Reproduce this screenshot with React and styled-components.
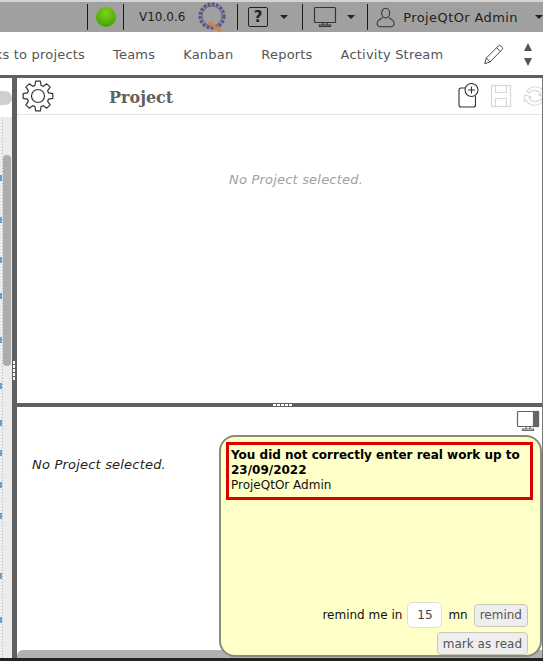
import React from 'react'
import styled, { createGlobalStyle } from 'styled-components'

const GlobalStyle = createGlobalStyle`
    html, body {
        margin: 0;
        padding: 0;
        background: #fff;
    }
    body {
        font-family: "DejaVu Sans", Verdana, sans-serif;
        overflow: hidden;
    }
`

const TICKS = [58, 100, 140, 176, 220, 266, 303, 333, 365, 396, 456, 500]

function gearPath() {
    const teeth = 8
    const pts = []
    for (let i = 0; i < teeth; i++) {
        const a = (i / teeth) * Math.PI * 2 - Math.PI / 2
        const step = (Math.PI * 2) / teeth
        const add = (r, off) => pts.push([16 + r * Math.cos(a + off * step), 16 + r * Math.sin(a + off * step)])
        add(11, -0.36)
        add(15, -0.2)
        add(15, 0.2)
        add(11, 0.36)
    }
    return 'M' + pts.map(p => p[0].toFixed(2) + ' ' + p[1].toFixed(2)).join('L') + 'Z'
}

function Gear() {
    return (
        <svg width="32" height="32" viewBox="0 0 32 32" fill="none" stroke="#333" strokeWidth="1.2" strokeLinejoin="round">
            <path d={gearPath()} />
            <circle cx="16" cy="16" r="6.5" />
        </svg>
    )
}

function QLogo() {
    return (
        <svg width="30" height="32" viewBox="0 0 30 32" fill="none">
            <circle cx="15" cy="15" r="12" stroke="#56568a" strokeWidth="3" strokeDasharray="3 1.300" />
            <circle cx="15" cy="15" r="10" stroke="#6d5a78" strokeWidth="1" />
            <path d="M12 21l6 5 6 4" stroke="#d9803f" strokeWidth="3.200" />
        </svg>
    )
}

function Monitor({ stripe }) {
    return (
        <svg width="24" height="24" viewBox="0 0 24 24" fill="none" stroke={stripe ? '#666' : '#333'} strokeWidth="1.200">
            <rect x="1.500" y="2.500" width="21" height="15" rx="1" />
            {stripe && <rect x="17.500" y="2.500" width="5" height="15" fill="#666" />}
            <path d="M10 17.500v2.500M14 17.500v2.500M6.500 21.500h11v-1.500h-11z" />
        </svg>
    )
}

function Person() {
    return (
        <svg width="20" height="23" viewBox="0 0 24 26" fill="none" stroke="#333" strokeWidth="1.300">
            <ellipse cx="12" cy="7.500" rx="5" ry="6" />
            <path d="M8 13c-1 2-6 2.500-6.500 6.500C1 23 3 24.500 5 24.500h14c2 0 4-1.500 3.500-5C22 15.500 17 15 16 13" />
        </svg>
    )
}

function Pencil() {
    return (
        <svg width="21" height="21" viewBox="0 0 24 24" fill="none" stroke="#444" strokeWidth="1.100">
            <path d="M2 22.500l1.800-6.500L17.500 2.300c1-1 2-1 3 0l1.200 1.200c1 1 1 2 0 3L8 20.500z" />
            <path d="M3.800 16l4.200 4.500M15.500 4.300l4.200 4.200" />
        </svg>
    )
}

function NewDoc() {
    return (
        <svg width="24" height="26" viewBox="0 0 24 26" fill="none" stroke="#333" strokeWidth="1.100">
            <path d="M8 5H3a2 2 0 0 0-2 2v15a2 2 0 0 0 2 2h12.500a2 2 0 0 0 2-2V13" />
            <circle cx="13.500" cy="7" r="6.500" fill="#fff" />
            <path d="M13.500 3.500v7M10 7h7" />
        </svg>
    )
}

function SaveIcon() {
    return (
        <svg width="22" height="24" viewBox="0 0 22 24" fill="none" stroke="#d6d6d6" strokeWidth="1.200">
            <rect x="1.500" y="1.500" width="19" height="21" />
            <path d="M5.500 1.500v7h11v-7M5.500 22.500v-8h11v8" />
        </svg>
    )
}

function RefreshIcon() {
    return (
        <svg width="27" height="24" viewBox="-3 0 27 24" fill="none" stroke="#d8d8d8" strokeWidth="1.200">
            <path d="M4 7A10 10 0 0 1 21 8l2-1-1 6-6-2 2-1A7.500 7.500 0 0 0 6 9z" />
            <path d="M20 17A10 10 0 0 1 3 16l-2 1 1-6 6 2-2 1A7.500 7.500 0 0 0 18 15z" />
        </svg>
    )
}

export default function App() {
    return (
        <>
            <GlobalStyle />
            <Page>
                <TopBar>
                    <TopSection>
                        <StatusDot />
                    </TopSection>
                    <VersionSection>
                        <Version>V10.0.6</Version>
                        <QLogo />
                    </VersionSection>
                    <MenuSection $gap={12}>
                        <HelpBox>?</HelpBox>
                        <Caret />
                    </MenuSection>
                    <MenuSection $gap={10}>
                        <Monitor />
                        <Caret />
                    </MenuSection>
                    <UserSection>
                        <Person />
                        <UserName>ProjeQtOr Admin</UserName>
                        <Caret />
                    </UserSection>
                </TopBar>

                <NavBar>
                    <NavItems>
                        <NavItem>Links to projects</NavItem>
                        <NavItem>Teams</NavItem>
                        <NavItem>Kanban</NavItem>
                        <NavItem>Reports</NavItem>
                        <NavItem>Activity Stream</NavItem>
                    </NavItems>
                    <NavTools>
                        <Pencil />
                        <Arrows>
                            <ArrowUp />
                            <ArrowDown />
                        </Arrows>
                    </NavTools>
                </NavBar>

                <Body>
                    <LeftPane>
                        <LeftTop />
                        <ListArea>
                            {TICKS.map(t => <Tick key={t} $top={t} />)}
                            <Scrollbar />
                        </ListArea>
                    </LeftPane>
                    <VSplitter>
                        <Grip />
                    </VSplitter>
                    <RightPane>
                        <DetailPanel>
                            <DetailHeader>
                                <Gear />
                                <Title>Project</Title>
                                <HeaderIcons>
                                    <NewDoc />
                                    <SaveIcon />
                                    <RefreshIcon />
                                </HeaderIcons>
                            </DetailHeader>
                            <EmptyText>No Project selected.</EmptyText>
                        </DetailPanel>
                        <HSplitter>
                            <HGrip />
                        </HSplitter>
                        <BottomPanel>
                            <BottomText>No Project selected.</BottomText>
                            <MonitorCorner>
                                <Monitor stripe />
                            </MonitorCorner>
                        </BottomPanel>
                        <BottomScroll />
                    </RightPane>
                </Body>
                <BlackEdge />

                <Popup>
                    <AlertBox>
                        <AlertTitle>You did not correctly enter real work up to 23/09/2022</AlertTitle>
                        <AlertUser>ProjeQtOr Admin</AlertUser>
                    </AlertBox>
                    <PopupActions>
                        <RemindRow>
                            <span>remind me in</span>
                            <MinutesInput>15</MinutesInput>
                            <span>mn</span>
                            <PopupButton>remind</PopupButton>
                        </RemindRow>
                        <PopupButton>mark as read</PopupButton>
                    </PopupActions>
                </Popup>
            </Page>
        </>
    )
}

const Page = styled.div`
    position: relative;
    width: 543px;
    height: 661px;
    display: flex;
    flex-direction: column;
    overflow: hidden;
    background: #fff;
`

const TopBar = styled.header`
    height: 30px;
    flex-shrink: 0;
    background: #a0a0a0;
    border-top: 2px solid #d4d4d4;
    display: flex;
    align-items: center;
    justify-content: flex-end;
`

const TopSection = styled.div`
    height: 26px;
    width: 37px;
    box-sizing: border-box;
    border-left: 1px solid #1a1a1a;
    border-right: 1px solid #1a1a1a;
    display: flex;
    align-items: center;
    justify-content: center;
`

const StatusDot = styled.div`
    width: 20px;
    height: 20px;
    border-radius: 50%;
    background: radial-gradient(circle at 50% 30%, #7fd320, #46a600 75%);
`

const VersionSection = styled.div`
    width: 113px;
    height: 32px;
    box-sizing: border-box;
    display: flex;
    align-items: center;
    gap: 12px;
    padding-left: 15px;
    font-size: 12px;
`

const Version = styled.span`
    color: #222;
`

const MenuSection = styled.div`
    height: 26px;
    width: 65px;
    box-sizing: border-box;
    border-left: 1px solid #1a1a1a;
    display: flex;
    align-items: center;
    gap: ${p => p.$gap}px;
    padding-left: 10px;
`

const HelpBox = styled.div`
    width: 18px;
    height: 18px;
    border: 1px solid #222;
    border-radius: 2px;
    font-size: 15px;
    font-weight: 700;
    color: #222;
    display: flex;
    align-items: center;
    justify-content: center;
`

const Caret = styled.div`
    width: 0;
    height: 0;
    border-left: 4px solid transparent;
    border-right: 4px solid transparent;
    border-top: 4px solid #222;
`

const UserSection = styled.div`
    height: 26px;
    width: 176px;
    box-sizing: border-box;
    border-left: 1px solid #1a1a1a;
    display: flex;
    align-items: center;
    padding-left: 8px;
    font-size: 13px;
    letter-spacing: 0.4px;
`

const UserName = styled.span`
    margin: 0 17px 0 8px;
    color: #222;
    white-space: nowrap;
`

const NavBar = styled.nav`
    height: 43px;
    flex-shrink: 0;
    box-sizing: border-box;
    padding-top: 2px;
    display: flex;
    align-items: center;
    justify-content: space-between;
    overflow: hidden;
    font-size: 13px;
    letter-spacing: 0.2px;
    color: #555;
`

const NavItems = styled.div`
    display: flex;
    gap: 28px;
    margin-left: -25px;
    white-space: nowrap;
`

const NavItem = styled.div``

const NavTools = styled.div`
    display: flex;
    align-items: center;
    gap: 20px;
    padding-right: 11px;
`

const Arrows = styled.div`
    display: flex;
    flex-direction: column;
    gap: 7px;
`

const ArrowUp = styled.div`
    width: 0;
    height: 0;
    border-left: 4px solid transparent;
    border-right: 4px solid transparent;
    border-bottom: 8px solid #555;
`

const ArrowDown = styled.div`
    width: 0;
    height: 0;
    border-left: 4px solid transparent;
    border-right: 4px solid transparent;
    border-top: 8px solid #555;
`

const Body = styled.div`
    flex: 1;
    min-height: 0;
    display: flex;
    border-top: 3px solid #606060;
`

const LeftPane = styled.aside`
    width: 12px;
    flex-shrink: 0;
    background: #fff;
    display: flex;
    flex-direction: column;
`

const LeftTop = styled.div`
    width: 12px;
    height: 14px;
    margin: 13px 0 12px;
    background: #cfcfcf;
    border-radius: 0 7px 7px 0;
`

const ListArea = styled.div`
    position: relative;
    flex: 1;
    background:
        repeating-linear-gradient(#b5b5b5 0 1px, transparent 1px 3px) 2px 0 / 1px 100% no-repeat,
        #ececec;
`

const Tick = styled.div`
    position: absolute;
    left: 0;
    top: ${p => p.$top}px;
    width: 2px;
    height: 6px;
    background: #6f9fc4;
`

const Scrollbar = styled.div`
    position: absolute;
    left: 3px;
    top: 38px;
    width: 8px;
    height: 211px;
    background: #adadad;
    border-radius: 4px;
`

const VSplitter = styled.div`
    width: 5px;
    flex-shrink: 0;
    background: #606060;
`

const Grip = styled.div`
    width: 2px;
    height: 20px;
    margin: 283px 0 0 1px;
    background: repeating-linear-gradient(#fff 0 3px, #606060 3px 4px);
`

const RightPane = styled.div`
    flex: 1;
    min-width: 0;
    display: flex;
    flex-direction: column;
    overflow: hidden;
    border-right: 1px solid #777;
`

const DetailPanel = styled.section`
    height: 325px;
    flex-shrink: 0;
    display: flex;
    flex-direction: column;
`

const DetailHeader = styled.div`
    height: 37px;
    flex-shrink: 0;
    box-sizing: border-box;
    border-bottom: 1px solid #e4e4e4;
    display: flex;
    align-items: center;
    padding-left: 5px;
`

const Title = styled.div`
    margin: 2px 0 0 55px;
    font-family: "DejaVu Serif", serif;
    font-size: 16px;
    font-weight: 700;
    color: #606060;
`

const HeaderIcons = styled.div`
    margin-left: auto;
    display: flex;
    align-items: center;
    gap: 8px;
    margin-right: -5px;
`

const EmptyText = styled.div`
    margin-top: 57px;
    padding-left: 33px;
    text-align: center;
    font-size: 13px;
    letter-spacing: 0.2px;
    font-style: italic;
    color: #a0a0a0;
`

const HSplitter = styled.div`
    height: 4px;
    flex-shrink: 0;
    background: #606060;
    display: flex;
    justify-content: center;
`

const HGrip = styled.div`
    width: 20px;
    height: 2px;
    margin: 1px 0 0 6px;
    background: repeating-linear-gradient(90deg, #fff 0 3px, #606060 3px 4px);
`

const BottomPanel = styled.section`
    flex: 1;
    position: relative;
    min-height: 0;
`

const BottomText = styled.div`
    margin: 50px 0 0 15px;
    font-size: 13px;
    letter-spacing: 0.2px;
    font-style: italic;
    color: #222;
`

const MonitorCorner = styled.div`
    position: absolute;
    top: 2px;
    right: 2px;
`

const BottomScroll = styled.div`
    height: 8px;
    flex-shrink: 0;
    background: #b0b0b0;
    border-radius: 6px 0 0 0;
`

const BlackEdge = styled.div`
    height: 3px;
    flex-shrink: 0;
    background: #222;
`

const Popup = styled.div`
    position: absolute;
    left: 219px;
    top: 435px;
    width: 323px;
    height: 222px;
    box-sizing: border-box;
    border: 2px solid #8a8a7a;
    border-radius: 16px;
    background: #ffffc8;
    padding: 5px 7px 0 5px;
    display: flex;
    flex-direction: column;
    font-size: 12px;
    color: #111;
`

const AlertBox = styled.div`
    border: 3px solid #dc0000;
    padding: 3px 2px 4px 2px;
    line-height: 15px;
`

const AlertTitle = styled.div`
    font-size: 12px;
    font-weight: 700;
    color: #000;
`

const AlertUser = styled.div`
    font-size: 12px;
`

const PopupActions = styled.div`
    margin: auto 5px 0 0;
    display: flex;
    flex-direction: column;
    align-items: flex-end;
    gap: 4px;
`

const RemindRow = styled.div`
    display: flex;
    align-items: center;
    gap: 6px;
`

const MinutesInput = styled.div`
    width: 35px;
    height: 26px;
    margin-left: -1px;
    box-sizing: border-box;
    border: 1px solid #ddd;
    border-radius: 5px;
    background: #fff;
    color: #444;
    display: flex;
    align-items: center;
    justify-content: center;
`

const PopupButton = styled.div`
    height: 23px;
    box-sizing: border-box;
    padding: 0 5px;
    border: 1px solid #c8c8b8;
    border-radius: 4px;
    background: #eee;
    color: #555;
    display: flex;
    align-items: center;
`
